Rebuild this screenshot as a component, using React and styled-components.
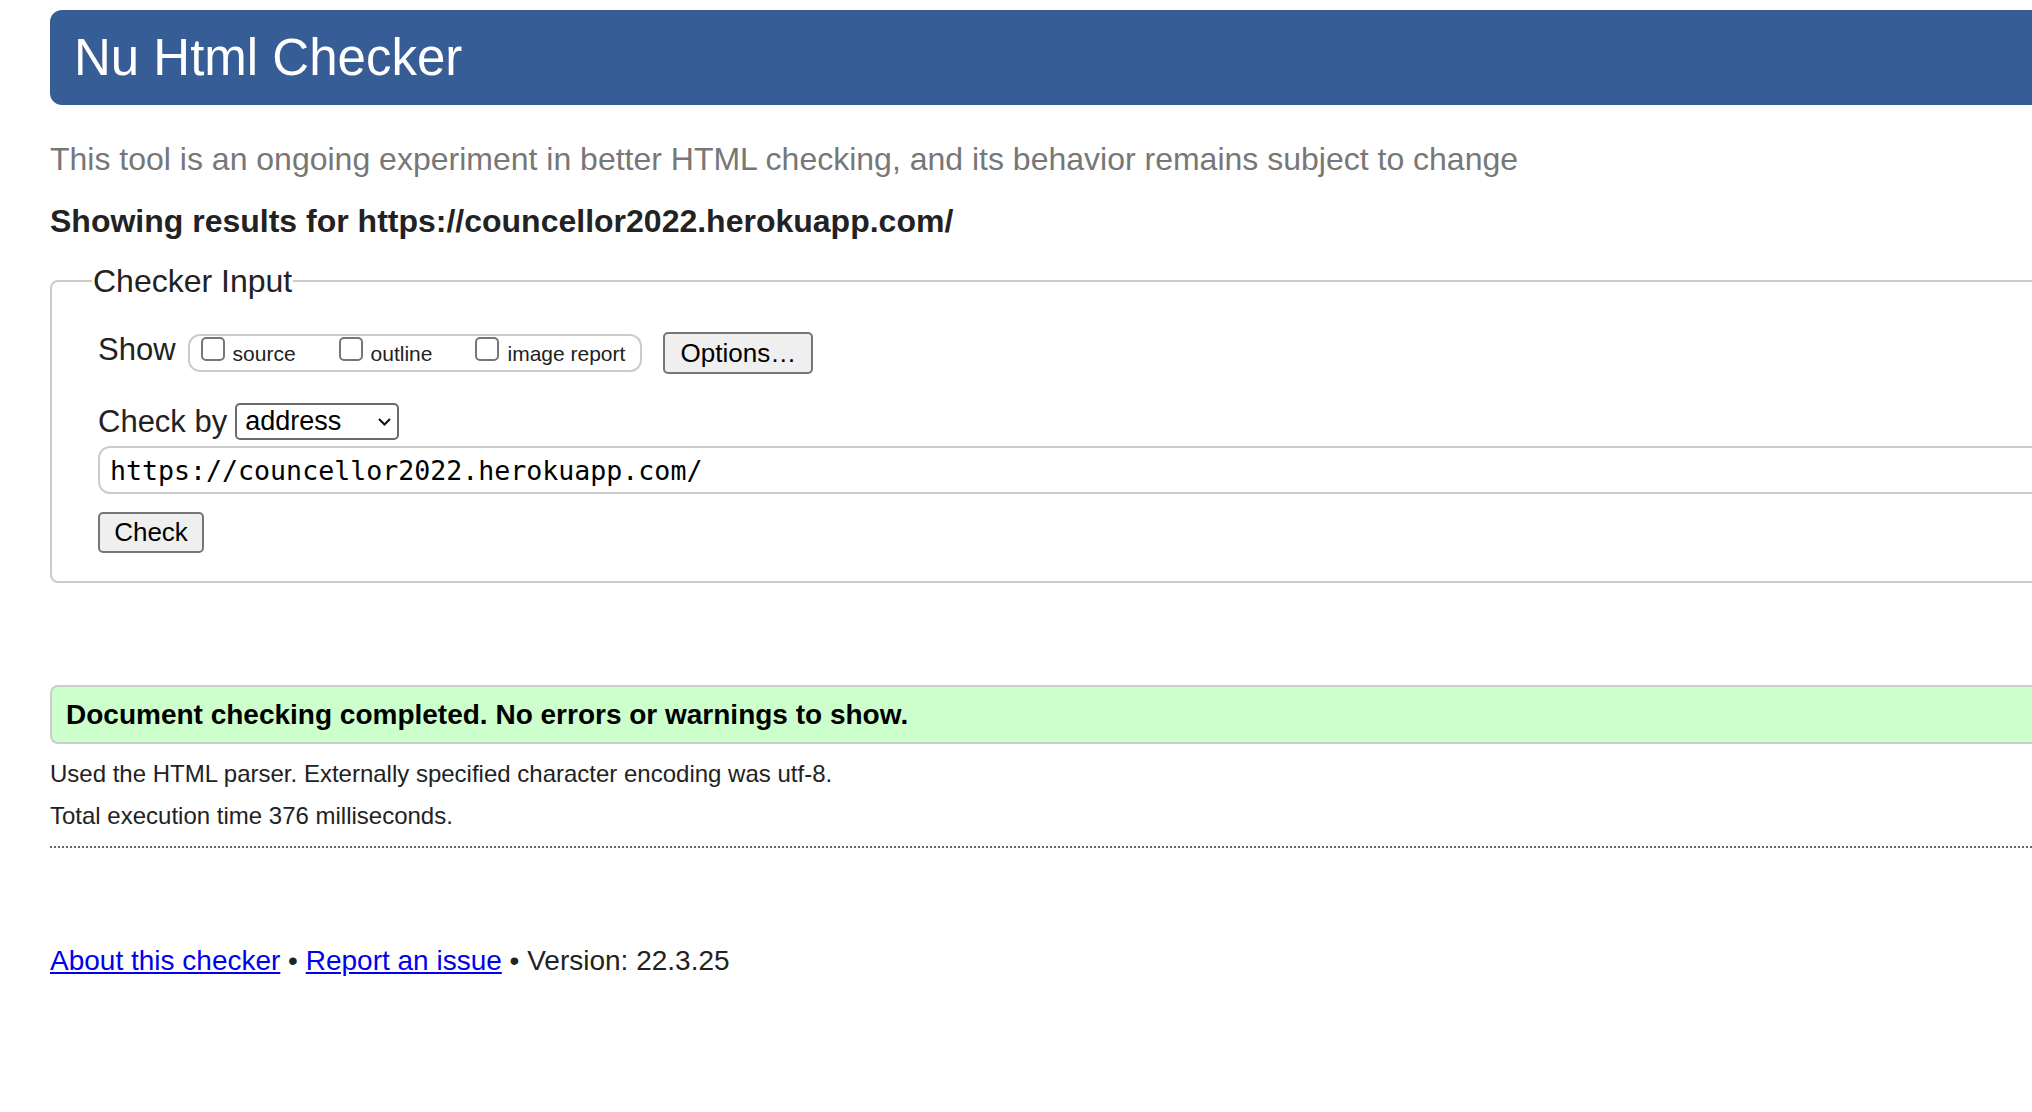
import React from 'react'
import styled, { createGlobalStyle } from 'styled-components'

const GlobalStyle = createGlobalStyle`
    html, body {
        margin: 0;
        padding: 0;
        background: #fff;
        overflow: hidden;
    }
    body {
        font-family: "Liberation Sans", Arial, Helvetica, sans-serif;
        color: #222;
    }
`

const Page = styled.main`
    box-sizing: border-box;
    width: 2260px;
    padding: 10px 0 120px 50px;
`

const Banner = styled.h1`
    margin: 0;
    height: 95px;
    padding-left: 24px;
    line-height: 95px;
    font-size: 51px;
    font-weight: normal;
    color: #fff;
    background: #365d95;
    border-radius: 12px;
`

const Tagline = styled.p`
    margin: 34px 0 0;
    font-size: 32px;
    line-height: 40px;
    color: #777;
`

const ResultsFor = styled.h2`
    margin: 22px 0 0;
    font-size: 32px;
    line-height: 40px;
    font-weight: bold;
`

const InputSet = styled.fieldset`
    margin: 22px 0 0;
    padding: 0 0 28px 46px;
    border: 2px solid #ccc;
    border-radius: 8px;
    min-inline-size: 0;
`

const Legend = styled.legend`
    margin-left: -6px;
    padding: 0 1px;
    font-size: 32px;
    line-height: 36px;
`

const Row = styled.div`
    display: flex;
    align-items: center;
    margin-top: ${({ $top }) => $top}px;
`

const Label = styled.span`
    font-size: 31px;
    line-height: 36px;
    margin-bottom: ${({ $lift }) => $lift || 0}px;
`

const CheckGroup = styled.div`
    box-sizing: border-box;
    display: flex;
    align-items: flex-start;
    height: 38px;
    margin-left: 12px;
    padding: 1px 15px 0 11px;
    border: 2px solid #ccc;
    border-radius: 12px;
`

const Option = styled.label`
    display: flex;
    align-items: baseline;
    margin-right: ${({ $last }) => ($last ? 0 : 43)}px;
    font-size: 21px;
    line-height: 24px;
`

const Box = styled.span`
    display: inline-block;
    box-sizing: border-box;
    width: 24px;
    height: 24px;
    margin-right: 8px;
    border: 2px solid #767676;
    border-radius: 5px;
    background: #fff;
`

const Button = styled.button`
    box-sizing: border-box;
    width: ${({ $w }) => $w}px;
    height: ${({ $h }) => $h}px;
    margin-left: ${({ $left }) => $left || 0}px;
    padding: 0;
    font-family: "Liberation Sans", Arial, sans-serif;
    font-size: 26px;
    color: #000;
    background: #efefef;
    border: 2px solid #767676;
    border-radius: 5px;
`

const Select = styled.div`
    box-sizing: border-box;
    display: flex;
    align-items: center;
    justify-content: space-between;
    width: 164px;
    height: 37px;
    margin-left: 8px;
    padding: 0 6px 0 8px;
    font-size: 27px;
    color: #000;
    border: 2px solid #6b6b6b;
    border-radius: 5px;
`

const UrlField = styled.input`
    display: block;
    box-sizing: border-box;
    width: 2200px;
    height: 48px;
    margin-top: 6px;
    padding: 0 0 0 10px;
    font-family: "DejaVu Sans Mono", "Liberation Mono", monospace;
    font-size: 26.6px;
    color: #000;
    border: 2px solid #ccc;
    border-radius: 12px;
    outline: none;
`

const CheckRow = styled.div`
    margin-top: 18px;
`

const Success = styled.p`
    box-sizing: border-box;
    margin: 102px 0 0;
    height: 59px;
    padding-left: 14px;
    font-size: 28px;
    line-height: 55px;
    font-weight: bold;
    color: #000;
    background: #ccffcc;
    border: 2px solid #ccc;
    border-radius: 8px;
`

const Detail = styled.p`
    margin: ${({ $top }) => $top}px 0 0;
    font-size: 24px;
    line-height: 32px;
`

const Rule = styled.hr`
    margin: 14px 0 0;
    height: 0;
    border: 0;
    border-top: 2px dotted #666;
`

const Footer = styled.p`
    margin: 97px 0 0;
    font-size: 28px;
    line-height: 32px;
    a {
        color: #0000ee;
        text-decoration: underline;
    }
`

const Chevron = () => (
    <svg width="13" height="8" viewBox="0 0 13 8" fill="none">
        <polyline points="1,1 6.5,6.5 12,1" stroke="#111" strokeWidth="2" />
    </svg>
)

const OPTIONS = ['source', 'outline', 'image report']

export default function App() {
    return (
        <>
            <GlobalStyle />
            <Page>
                <Banner>Nu Html Checker</Banner>
                <Tagline>
                    This tool is an ongoing experiment in better HTML checking, and its behavior
                    remains subject to change
                </Tagline>
                <ResultsFor>Showing results for https://councellor2022.herokuapp.com/</ResultsFor>

                <InputSet>
                    <Legend>Checker Input</Legend>
                    <Row $top={33}>
                        <Label $lift={6}>Show</Label>
                        <CheckGroup>
                            {OPTIONS.map((name, i) => (
                                <Option key={name} $last={i === OPTIONS.length - 1}>
                                    <Box />
                                    {name}
                                </Option>
                            ))}
                        </CheckGroup>
                        <Button $w={150} $h={42} $left={21}>Options…</Button>
                    </Row>
                    <Row $top={29}>
                        <Label>Check by</Label>
                        <Select>
                            address
                            <Chevron />
                        </Select>
                    </Row>
                    <UrlField readOnly value="https://councellor2022.herokuapp.com/" />
                    <CheckRow>
                        <Button $w={106} $h={41}>Check</Button>
                    </CheckRow>
                </InputSet>

                <Success>Document checking completed. No errors or warnings to show.</Success>
                <Detail $top={14}>
                    Used the HTML parser. Externally specified character encoding was utf-8.
                </Detail>
                <Detail $top={10}>Total execution time 376 milliseconds.</Detail>
                <Rule />
                <Footer>
                    <a href="#about">About this checker</a> • <a href="#issue">Report an issue</a> •
                    Version: 22.3.25
                </Footer>
            </Page>
        </>
    )
}
